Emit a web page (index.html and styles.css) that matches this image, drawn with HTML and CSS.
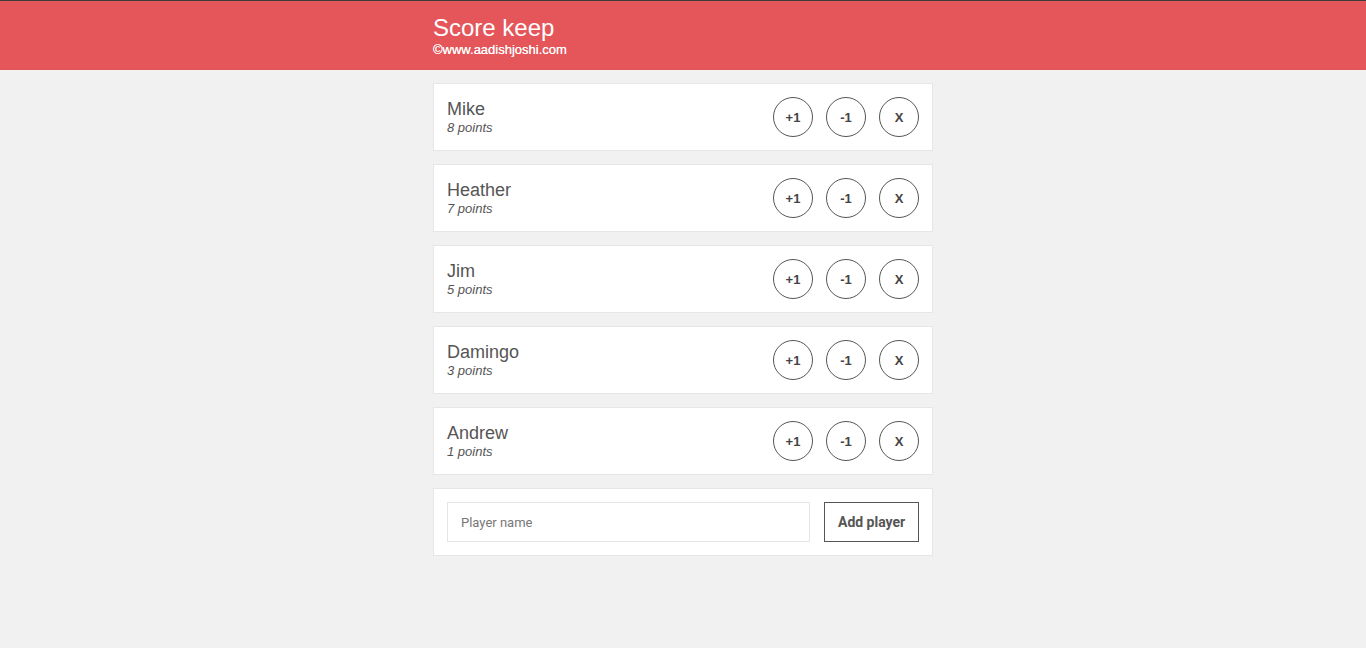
FILE: index.html
```html
<!DOCTYPE html>
<html lang="en">
<head>
<meta charset="utf-8">
<title>Score keep</title>
<link rel="stylesheet" href="styles.css">
</head>
<body>
<header class="topbar">
  <div class="wrap">
    <h1 class="title">Score keep</h1>
    <div class="credit">©www.aadishjoshi.com</div>
  </div>
</header>
<main class="wrap list">
  <div class="card player">
    <div class="info"><div class="name">Mike</div><div class="points">8 points</div></div>
    <div class="actions"><button class="round">+1</button><button class="round">-1</button><button class="round">X</button></div>
  </div>
  <div class="card player">
    <div class="info"><div class="name">Heather</div><div class="points">7 points</div></div>
    <div class="actions"><button class="round">+1</button><button class="round">-1</button><button class="round">X</button></div>
  </div>
  <div class="card player">
    <div class="info"><div class="name">Jim</div><div class="points">5 points</div></div>
    <div class="actions"><button class="round">+1</button><button class="round">-1</button><button class="round">X</button></div>
  </div>
  <div class="card player">
    <div class="info"><div class="name">Damingo</div><div class="points">3 points</div></div>
    <div class="actions"><button class="round">+1</button><button class="round">-1</button><button class="round">X</button></div>
  </div>
  <div class="card player">
    <div class="info"><div class="name">Andrew</div><div class="points">1 points</div></div>
    <div class="actions"><button class="round">+1</button><button class="round">-1</button><button class="round">X</button></div>
  </div>
  <form class="card addform">
    <input class="field" type="text" placeholder="Player name">
    <button class="addbtn" type="button">Add player</button>
  </form>
</main>
</body>
</html>
```
FILE: styles.css
```css
html, body {
  margin: 0;
  padding: 0;
}
body {
  background: #f1f1f1;
  font-family: "Liberation Sans", Arial, sans-serif;
  color: #555;
}
.wrap {
  width: 500px;
  margin: 0 auto;
}
.topbar {
  background: #e4565a;
  border-top: 1px solid #3b3b3b;
  height: 70px;
  box-sizing: border-box;
  padding-top: 13px;
}
.title {
  margin: 0;
  font-size: 24px;
  line-height: 28px;
  font-weight: normal;
  color: #fff;
}
.credit {
  font-size: 13px;
  line-height: 15px;
  color: #fff;
  font-weight: normal;
  text-shadow: 0 0 0.4px #fff;
}
.list {
  padding-top: 13px;
  display: flex;
  flex-direction: column;
  gap: 13px;
}
.card {
  background: #fff;
  border: 1px solid #e6e6e6;
  box-sizing: border-box;
  height: 68px;
  padding: 13px;
  display: flex;
  align-items: center;
  margin: 0;
}
.player {
  justify-content: space-between;
}
.name {
  font-size: 18px;
  line-height: 21px;
  color: #555;
}
.points {
  font-size: 13px;
  line-height: 15px;
  font-style: italic;
  color: #555;
}
.actions {
  display: flex;
  gap: 13px;
}
.round {
  width: 40px;
  height: 40px;
  border-radius: 50%;
  border: 1px solid #555;
  background: #fff;
  color: #444;
  font-family: "Liberation Sans", Arial, sans-serif;
  font-weight: bold;
  font-size: 13px;
  padding: 0;
  display: flex;
  align-items: center;
  justify-content: center;
}
.addform {
  gap: 14px;
}
.field {
  width: 364px;
  height: 40px;
  box-sizing: border-box;
  border: 1px solid #e6e6e6;
  padding: 0 13px;
  font-family: Roboto, "Liberation Sans", sans-serif;
  font-size: 13px;
  color: #555;
  outline: none;
  margin: 0;
}
.field::placeholder {
  color: #777;
}
.addbtn {
  width: 95px;
  height: 40px;
  box-sizing: border-box;
  border: 1px solid #555;
  background: #fff;
  color: #555;
  font-family: Roboto, "Liberation Sans", sans-serif;
  font-weight: bold;
  font-size: 14px;
  padding: 0;
  margin: 0;
}
```
